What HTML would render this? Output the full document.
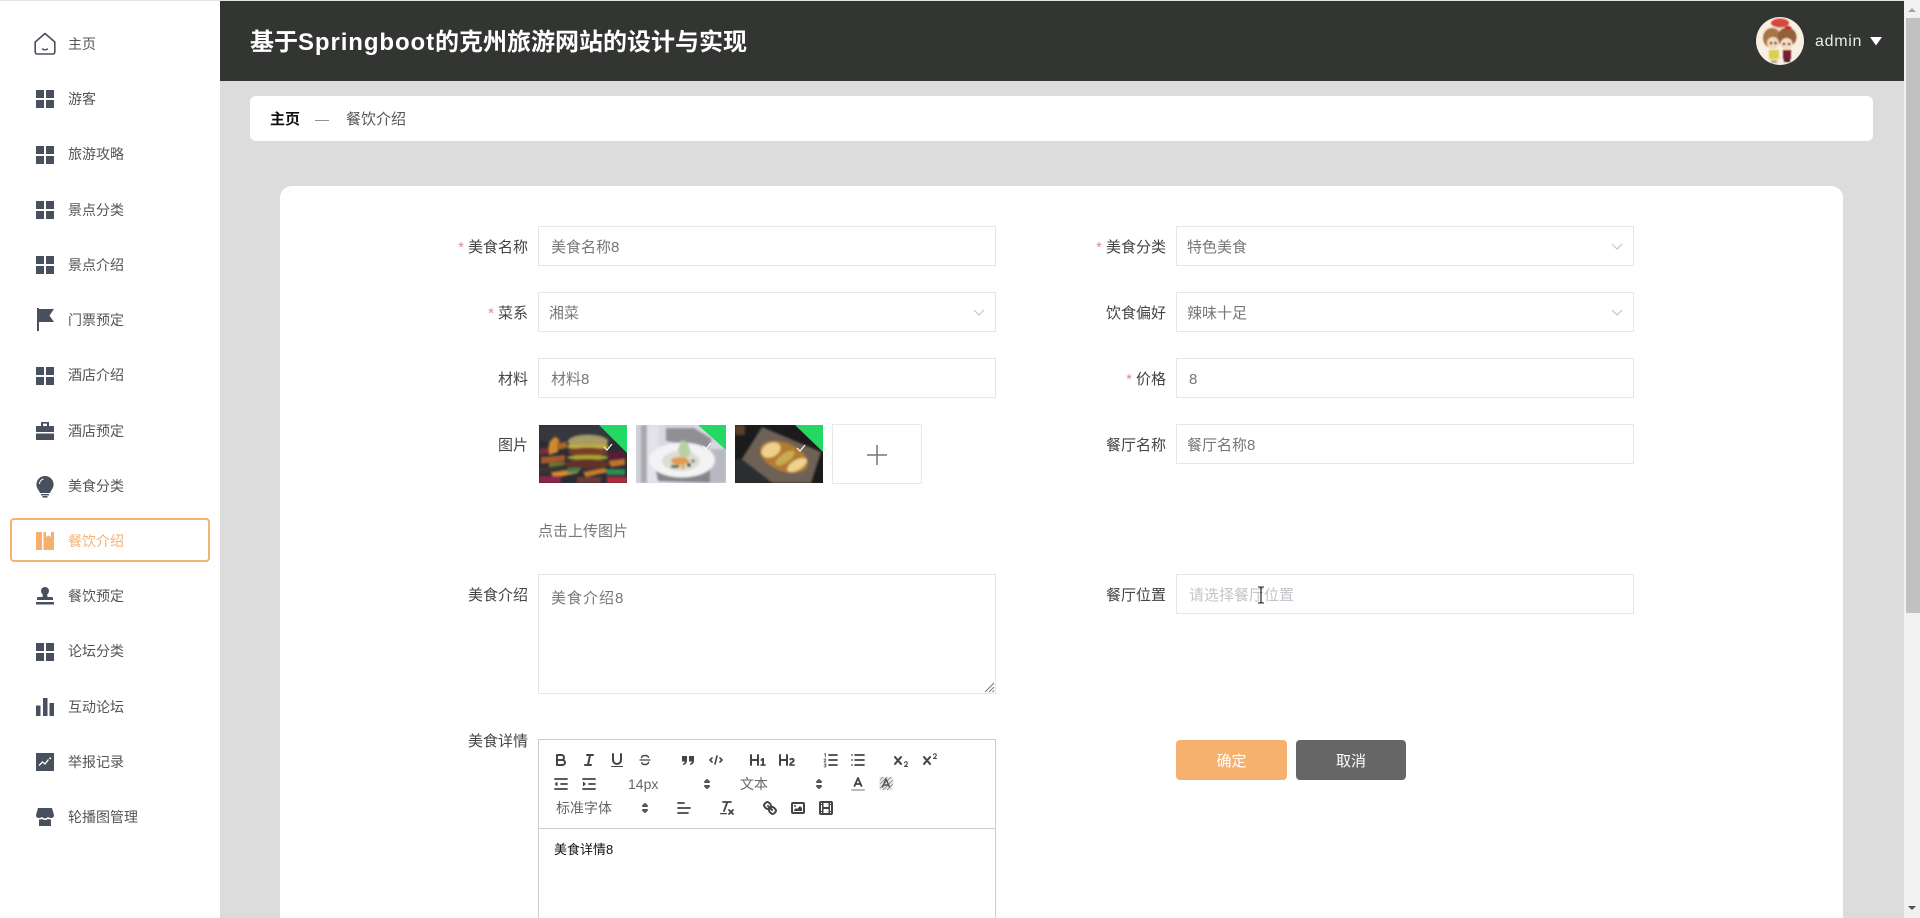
<!DOCTYPE html>
<html lang="zh">
<head>
<meta charset="utf-8">
<title>餐饮介绍</title>
<style>
html,body{margin:0;padding:0;width:1920px;height:918px;overflow:hidden;background:#dcdcdc}
body{position:relative;font-family:"Liberation Sans","Noto Sans CJK SC",sans-serif;font-size:14px;color:#444}
.a{position:absolute}
.t{position:absolute;white-space:nowrap;line-height:20px}
#side{position:absolute;left:0;top:1px;width:220px;height:917px;background:#fff}
.m{position:absolute;left:68px;white-space:nowrap;line-height:20px;color:#555;font-size:14px}
.i{position:absolute;left:36px;width:18px;height:18px}
.box{position:absolute;box-sizing:border-box;border:1px solid #e6e6e6;background:#fff;width:458px;height:40px}
.val{position:absolute;white-space:nowrap;line-height:20px;color:#777;font-size:15px;margin-top:1px}
.lab{position:absolute;white-space:nowrap;line-height:20px;color:#444;font-size:15px;text-align:right;width:110px;margin-top:1px}
.lab b{color:#e08a9a;font-weight:400;margin-right:4px}
.q{position:absolute;width:18px;height:18px;fill:none;stroke:#444;stroke-width:2;stroke-linecap:round;stroke-linejoin:round}
.q .f{fill:#444;stroke:none}
.th{position:absolute;top:425px;height:58px;overflow:hidden}
.sel{position:absolute;width:18px;height:18px;fill:#555;stroke:#555;stroke-width:2;stroke-linejoin:round}
.chev{position:absolute;width:14px;height:14px;fill:none;stroke:#c4c6cb;stroke-width:1.2}
</style>
</head>
<body>
<div class="a" style="left:0;top:0;width:1920px;height:1px;background:#e4e4e4"></div>

<!-- Sidebar -->
<div id="side"></div>
<svg class="a" style="left:34px;top:32px" width="22" height="24" viewBox="0 0 22 24" fill="none" stroke="#47505c" stroke-width="1.6" stroke-linejoin="round" stroke-linecap="round"><path d="M1.2 10 L11 1.500 L20.800 10 V20 a2 2 0 0 1-2 2 H3.200 a2 2 0 0 1-2-2 Z"/><path d="M8.500 17 q2.500 1.600 5 0" stroke-width="1.400"/></svg>
<span class="m" style="top:34px">主页</span>

<svg class="i" style="top:90px" viewBox="0 0 18 18" fill="#47505c"><rect width="8" height="8"/><rect x="10" width="8" height="8"/><rect y="10" width="8" height="8"/><rect x="10" y="10" width="8" height="8"/></svg>
<span class="m" style="top:89px">游客</span>

<svg class="i" style="top:146px" viewBox="0 0 18 18" fill="#47505c"><rect width="8" height="8"/><rect x="10" width="8" height="8"/><rect y="10" width="8" height="8"/><rect x="10" y="10" width="8" height="8"/></svg>
<span class="m" style="top:144px">旅游攻略</span>

<svg class="i" style="top:201px" viewBox="0 0 18 18" fill="#47505c"><rect width="8" height="8"/><rect x="10" width="8" height="8"/><rect y="10" width="8" height="8"/><rect x="10" y="10" width="8" height="8"/></svg>
<span class="m" style="top:200px">景点分类</span>

<svg class="i" style="top:256px" viewBox="0 0 18 18" fill="#47505c"><rect width="8" height="8"/><rect x="10" width="8" height="8"/><rect y="10" width="8" height="8"/><rect x="10" y="10" width="8" height="8"/></svg>
<span class="m" style="top:255px">景点介绍</span>

<svg class="a" style="left:36px;top:308px" width="19" height="23" viewBox="0 0 19 23" fill="#47505c"><rect x="1" y="0" width="2" height="23"/><path d="M3 1 H18 L13.500 7.500 L18 14 H3 Z"/></svg>
<span class="m" style="top:310px">门票预定</span>

<svg class="i" style="top:367px" viewBox="0 0 18 18" fill="#47505c"><rect width="8" height="8"/><rect x="10" width="8" height="8"/><rect y="10" width="8" height="8"/><rect x="10" y="10" width="8" height="8"/></svg>
<span class="m" style="top:365px">酒店介绍</span>

<svg class="i" style="top:422px" viewBox="0 0 18 18" fill="#47505c"><path d="M5 0 H13 V4 H18 V10 H0 V4 H5 Z M7 1.600 V4 H11 V1.600 Z" fill-rule="evenodd"/><rect y="11.500" width="18" height="6.500"/></svg>
<span class="m" style="top:421px">酒店预定</span>

<svg class="a" style="left:36px;top:476px" width="18" height="22" viewBox="0 0 18 22" fill="#47505c"><path d="M9 0 a8.600 8.600 0 0 1 8.600 8.600 c0 3.600-2.600 5.600-3.600 8.400 H4 C3 14.200.4 12.200.4 8.600 A8.600 8.600 0 0 1 9 0Z"/><rect x="5" y="18" width="8" height="1.400"/><rect x="6.500" y="20" width="5" height="1.600"/><path d="M3.500 8 a5 5 0 0 1 4-5" fill="none" stroke="#fff" stroke-width="1"/></svg>
<span class="m" style="top:476px">美食分类</span>

<div class="a" style="left:10px;top:518px;width:200px;height:44px;box-sizing:border-box;border:2px solid #f3b373;border-radius:4px"></div>
<svg class="i" style="top:532px" viewBox="0 0 18 18" fill="#f5b06c"><rect width="6" height="18"/><path d="M7.500 0 H10 V5 L12.500 3.500 L15 5 V0 H18 V18 H7.500 Z"/></svg>
<span class="m" style="top:531px;color:#f3b373">餐饮介绍</span>

<svg class="i" style="top:587px" viewBox="0 0 18 18" fill="#47505c"><circle cx="9" cy="4" r="4"/><path d="M7 6 H11 L11.500 10 H16 Q17 10 17 12 V13 H1 V12 Q1 10 2 10 H6.500 Z"/><rect y="15" width="18" height="2.500"/></svg>
<span class="m" style="top:586px">餐饮预定</span>

<svg class="i" style="top:643px" viewBox="0 0 18 18" fill="#47505c"><rect width="8" height="8"/><rect x="10" width="8" height="8"/><rect y="10" width="8" height="8"/><rect x="10" y="10" width="8" height="8"/></svg>
<span class="m" style="top:641px">论坛分类</span>

<svg class="i" style="top:698px" viewBox="0 0 18 18" fill="#47505c"><rect y="7.500" width="4.500" height="10.500"/><rect x="7" width="4.500" height="18"/><rect x="13.500" y="5" width="4.500" height="13"/></svg>
<span class="m" style="top:697px">互动论坛</span>

<svg class="i" style="top:753px" viewBox="0 0 18 18"><rect width="18" height="18" fill="#47505c"/><path d="M3 12.500 L6.500 9 L9 11 L12.500 6.500" fill="none" stroke="#fff" stroke-width="1.300"/><circle cx="14.200" cy="5.200" r="1" fill="#fff"/></svg>
<span class="m" style="top:752px">举报记录</span>

<svg class="i" style="top:808px" viewBox="0 0 18 18" fill="#47505c"><path d="M2 0 H16 L18 7 Q18 10 15 10 Q13 10 12 9 Q10.500 10.500 9 10.500 Q7.500 10.500 6 9 Q5 10 3 10 Q0 10 0 7 Z"/><path d="M3 11.500 Q5 11.500 6 11 Q7.500 12 9 12 Q10.500 12 12 11 Q13 11.500 15 11.500 V18 H3 Z"/></svg>
<span class="m" style="top:807px">轮播图管理</span>

<!-- Header -->
<div class="a" style="left:220px;top:1px;width:1684px;height:80px;background:#333532"></div>
<div class="t" style="left:250px;top:26px;line-height:34px;font-size:24px;font-weight:700;color:#fff">基于<span style="letter-spacing:.9px">Springboot</span>的克州旅游网站的设计与实现</div>

<svg class="a" style="left:1756px;top:17px" width="48" height="48" viewBox="0 0 48 48">
<defs><clipPath id="av"><circle cx="24" cy="24" r="24"/></clipPath><filter id="b1"><feGaussianBlur stdDeviation=".8"/></filter></defs>
<g clip-path="url(#av)"><rect width="48" height="48" fill="#f8efe0"/>
<g filter="url(#b1)">
<path d="M12 14 Q24 0 36 14 Z" fill="#eed8c8"/>
<ellipse cx="24" cy="6" rx="9" ry="4.500" fill="#d6463a"/>
<ellipse cx="16" cy="21" rx="9" ry="10" fill="#a87644"/>
<ellipse cx="31" cy="20" rx="9.500" ry="9.500" fill="#94603a"/>
<ellipse cx="17" cy="26" rx="6" ry="6" fill="#f4d8bc"/>
<ellipse cx="30.500" cy="27" rx="6" ry="6" fill="#f6dcc2"/>
<circle cx="15" cy="26" r="1.300" fill="#4a3020"/><circle cx="19.500" cy="26" r="1.300" fill="#4a3020"/><circle cx="28" cy="27" r="1.300" fill="#4a3020"/><circle cx="33" cy="27" r="1.300" fill="#4a3020"/>
<rect x="13" y="33" width="10" height="9" fill="#dccf50"/>
<rect x="27" y="33" width="8" height="9" fill="#7c1f33"/>
<ellipse cx="32" cy="11" rx="3.500" ry="2" fill="#c22a2a"/>
<rect x="15" y="43" width="6" height="3" fill="#bda98a"/><rect x="28" y="42" width="6" height="3" fill="#3a1a20"/>
</g></g></svg>
<div class="t" style="left:1815px;top:32px;font-size:16px;letter-spacing:.7px;color:#e8ece8">admin</div>
<svg class="a" style="left:1870px;top:37px" width="12" height="9" viewBox="0 0 12 9"><path d="M0 0 H12 L6 8.500Z" fill="#fff"/></svg>

<!-- Scrollbar -->
<div class="a" style="left:1904px;top:0;width:16px;height:918px;background:#f1f1f1"></div>
<div class="a" style="left:1906px;top:18px;width:14px;height:595px;background:#c1c1c1"></div>
<svg class="a" style="left:1907px;top:6px" width="10" height="8" viewBox="0 0 10 8"><path d="M1 6 L5 2 L9 6Z" fill="#a3a3a3"/></svg>
<svg class="a" style="left:1907px;top:904px" width="10" height="8" viewBox="0 0 10 8"><path d="M1 2 L5 6 L9 2Z" fill="#505050"/></svg>

<!-- Breadcrumb -->
<div class="a" style="left:250px;top:96px;width:1623px;height:45px;background:#fff;border-radius:6px"></div>
<div class="t" style="left:270px;top:110px;font-size:15px;font-weight:700;color:#111">主页</div>
<div class="t" style="left:315px;top:109px;color:#888">—</div>
<div class="t" style="left:346px;top:110px;font-size:15px;color:#555">餐饮介绍</div>

<!-- Card -->
<div class="a" style="left:280px;top:186px;width:1563px;height:732px;background:#fff;border-radius:12px 12px 0 0"></div>

<!-- Row 1 -->
<div class="lab" style="left:418px;top:237px"><b>*</b>美食名称</div>
<div class="box" style="left:538px;top:226px"></div>
<div class="val" style="left:551px;top:237px">美食名称8</div>
<div class="lab" style="left:1056px;top:237px"><b>*</b>美食分类</div>
<div class="box" style="left:1176px;top:226px"></div>
<div class="val" style="left:1187px;top:237px">特色美食</div>
<svg class="chev" style="left:1610px;top:239px" viewBox="0 0 14 14"><path d="M2 5 L7 10 L12 5"/></svg>

<!-- Row 2 -->
<div class="lab" style="left:418px;top:303px"><b>*</b>菜系</div>
<div class="box" style="left:538px;top:292px"></div>
<div class="val" style="left:549px;top:303px">湘菜</div>
<svg class="chev" style="left:972px;top:305px" viewBox="0 0 14 14"><path d="M2 5 L7 10 L12 5"/></svg>
<div class="lab" style="left:1056px;top:303px">饮食偏好</div>
<div class="box" style="left:1176px;top:292px"></div>
<div class="val" style="left:1187px;top:303px">辣味十足</div>
<svg class="chev" style="left:1610px;top:305px" viewBox="0 0 14 14"><path d="M2 5 L7 10 L12 5"/></svg>

<!-- Row 3 -->
<div class="lab" style="left:418px;top:369px">材料</div>
<div class="box" style="left:538px;top:358px"></div>
<div class="val" style="left:551px;top:369px">材料8</div>
<div class="lab" style="left:1056px;top:369px"><b>*</b>价格</div>
<div class="box" style="left:1176px;top:358px"></div>
<div class="val" style="left:1189px;top:369px">8</div>

<!-- Row 4 images -->
<div class="lab" style="left:418px;top:435px">图片</div>

<svg class="th" style="left:539px" width="88" height="58" viewBox="0 0 88 58">
<defs><filter id="b2" x="-5%" y="-5%" width="110%" height="110%"><feGaussianBlur stdDeviation="1"/></filter></defs>
<rect width="88" height="58" fill="#2b2c33"/>
<g filter="url(#b2)">
<rect x="0" y="0" width="88" height="16" fill="#36373e"/>
<path d="M10 18 l6 -6 l4 3 l-1 12 l-9 3Z" fill="#d08a2e"/>
<path d="M0 24 l10 -2 v6 l-10 2Z" fill="#7a2e38"/>
<path d="M18 18 l10 -1 v6 l-10 2Z" fill="#a8662c"/>
<path d="M2 32 l24 -2 v6 l-24 3Z" fill="#a6592e"/>
<path d="M10 38 l16 -1 v3 l-16 2Z" fill="#6b7a34"/>
<ellipse cx="49" cy="17" rx="20" ry="7" fill="#a89b66"/>
<rect x="29" y="20" width="40" height="3.500" fill="#c2b03a"/>
<ellipse cx="49" cy="27" rx="20" ry="4.500" fill="#7b3a2c"/>
<ellipse cx="49" cy="32.500" rx="21" ry="2.500" fill="#a9a730"/>
<ellipse cx="48" cy="39" rx="23" ry="5" fill="#62302a"/>
<path d="M68 28 l18 -2 v8 l-18 2Z" fill="#5a1f34"/>
<path d="M70 36 l16 -2 v6 l-14 2Z" fill="#c0752c"/>
<path d="M0 42 h26 v6 h-26Z" fill="#40362e"/>
<path d="M12 48 l24 -4 l3 4 l-24 5Z" fill="#d68c30"/>
<path d="M44 47 l22 -4 l3 4 l-22 5Z" fill="#c87c2a"/>
<path d="M66 44 l20 0 v6 h-18Z" fill="#2f8c54"/>
<path d="M28 43 l14 0 l-2 4 l-12 1Z" fill="#3d8050"/>
<path d="M0 51 h22 v7 h-22Z" fill="#8a2548"/>
<path d="M38 52 h24 v6 h-24Z" fill="#6e3a3a"/>
<path d="M68 52 h20 v6 h-20Z" fill="#b52a3e"/>
</g>
<path d="M60 0 H88 V28Z" fill="#23d963"/>
<path d="M65 22 l3 3 l5 -6" fill="none" stroke="#fff" stroke-width="1.200"/>
</svg>

<svg class="th" style="left:636px" width="90" height="58" viewBox="0 0 90 58">
<rect width="90" height="58" fill="#d8d8e4"/>
<g filter="url(#b2)">
<rect x="0" y="0" width="6" height="58" fill="#cfcfd6"/>
<rect x="5" y="0" width="6" height="58" fill="#a8a8ac"/>
<rect x="11" y="0" width="12" height="58" fill="#e2e2ea"/>
<path d="M18 38 L22 56 L84 58 L78 44Z" fill="#85858a"/>
<path d="M30 3 L58 3 L76 14 L72 24 L30 16Z" fill="#909094"/>
<rect x="74" y="24" width="16" height="34" fill="#b8b8c0"/>
<ellipse cx="46" cy="35" rx="33" ry="17.500" fill="#f3f3f5"/>
<ellipse cx="45" cy="36" rx="19" ry="10" fill="#dedcd4"/>
<path d="M42 24 l4 -9 l6 3 l3 10 l-5 5 l-6 -2Z" fill="#bad0a2"/>
<ellipse cx="44" cy="36" rx="9" ry="4" fill="#e29c4e"/>
<rect x="35" y="40" width="8" height="3" fill="#3a6a40"/>
<circle cx="53" cy="40" r="2" fill="#5a2a36"/><circle cx="47" cy="42" r="2" fill="#e8a030"/><circle cx="57" cy="36" r="1.500" fill="#3a2a30"/>
</g>
<path d="M62 0 H90 V25Z" fill="#23d963"/>
<path d="M67 21 l3 3 l5 -6" fill="none" stroke="#fff" stroke-width="1.200"/>
</svg>

<svg class="th" style="left:735px" width="88" height="58" viewBox="0 0 88 58">
<rect width="88" height="58" fill="#1c1b1b"/>
<g filter="url(#b2)">
<rect x="0" y="0" width="10" height="10" fill="#5a3e2c"/>
<rect x="0" y="34" width="40" height="24" fill="#2c2d31"/>
<path d="M27 2 L86 27 L76 58 L38 58 L7 34 Z" fill="#6e6257"/>
<ellipse cx="49" cy="32" rx="25" ry="14" transform="rotate(22 49 32)" fill="#b47a30"/>
<ellipse cx="36" cy="25" rx="10" ry="7" transform="rotate(-25 36 25)" fill="#eed08c"/>
<ellipse cx="50" cy="33" rx="11" ry="4.500" transform="rotate(-35 50 33)" fill="#c8ac54"/>
<ellipse cx="62" cy="40" rx="11" ry="5" transform="rotate(-30 62 40)" fill="#edd28c"/>
</g>
<path d="M60 0 H88 V27Z" fill="#23d963"/>
<path d="M62 23 l3 3 l5 -6" fill="none" stroke="#fff" stroke-width="1.200"/>
</svg>

<div class="a" style="left:832px;top:424px;width:90px;height:60px;box-sizing:border-box;border:1px solid #e8e8e8"></div>
<svg class="a" style="left:867px;top:445px" width="20" height="20" viewBox="0 0 20 20"><path d="M10 0 V20 M0 10 H20" stroke="#777" stroke-width="1.500"/></svg>
<div class="t" style="left:538px;top:522px;font-size:15px;color:#777">点击上传图片</div>

<div class="lab" style="left:1056px;top:435px">餐厅名称</div>
<div class="box" style="left:1176px;top:424px"></div>
<div class="val" style="left:1187px;top:435px">餐厅名称8</div>

<!-- Row 5 -->
<div class="lab" style="left:418px;top:585px">美食介绍</div>
<div class="box" style="left:538px;top:574px;height:120px"></div>
<svg class="a" style="left:984px;top:682px" width="11" height="11" viewBox="0 0 11 11"><path d="M1 10 L10 1 M5 10 L10 5 M8.500 10 L10 8.500" stroke="#777" stroke-width="1"/></svg>
<div class="val" style="left:551px;top:588px;letter-spacing:1px">美食介绍8</div>
<div class="lab" style="left:1056px;top:585px">餐厅位置</div>
<div class="box" style="left:1176px;top:574px"></div>
<div class="val" style="left:1189px;top:585px;color:#c2c4c9">请选择餐厅位置</div>
<svg class="a" style="left:1256px;top:586px" width="10" height="18" viewBox="0 0 10 18"><path d="M2 1 H4 Q5 1 5 2.500 V15.500 Q5 17 4 17 H2 M8 1 H6 Q5 1 5 2.500 M8 17 H6 Q5 17 5 15.500" fill="none" stroke="#111" stroke-width="1.100"/></svg>

<!-- Row 6 -->
<div class="lab" style="left:418px;top:731px">美食详情</div>

<div class="a" style="left:538px;top:739px;width:458px;height:179px;box-sizing:border-box;border:1px solid #ccc;border-bottom:0"></div>
<div class="a" style="left:538px;top:828px;width:458px;height:1px;background:#ccc"></div>

<!-- Toolbar row 1 -->
<svg class="q" style="left:552px;top:751px" viewBox="0 0 18 18"><path d="M5,4H9.500A2.500,2.500,0,0,1,12,6.500v0A2.500,2.500,0,0,1,9.500,9H5V4Z"/><path d="M5,9h5.500A2.500,2.500,0,0,1,13,11.500v0A2.500,2.500,0,0,1,10.500,14H5V9Z"/></svg>
<svg class="q" style="left:580px;top:751px" viewBox="0 0 18 18"><path d="M7 4H13M5 14H11M8 14L10 4"/></svg>
<svg class="q" style="left:608px;top:751px" viewBox="0 0 18 18"><path d="M5,3V9a4,4,0,0,0,4,4h0a4,4,0,0,0,4-4V3"/><rect class="f" height="1" rx=".5" width="12" x="3" y="15"/></svg>
<svg class="q" style="left:636px;top:751px" viewBox="0 0 18 18"><path d="M14 9H4" stroke-width="1.300"/><path d="M12.400 6.300C12 5 10.700 4.500 9 4.500 7 4.500 5.500 5.500 5.500 6.700" stroke-width="1.400"/><path d="M5.700 11.700C6 13 7.300 13.500 9 13.500c2 0 3.500-1 3.500-2.200" stroke-width="1.400"/></svg>
<svg class="q" style="left:679px;top:751px" viewBox="0 0 18 18"><path class="f" d="M3 5h5v4.500c0 2.500-1.500 4-3.800 4.500L3.800 12.800C5 12.400 5.700 11.600 5.800 10.500H3ZM10 5h5v4.500c0 2.500-1.500 4-3.800 4.500l-.4-1.200c1.200-.4 1.900-1.200 2-2.300H10Z"/></svg>
<svg class="q" style="left:707px;top:751px" viewBox="0 0 18 18"><path d="M5 7L3 9L5 11M13 7L15 9L13 11M10 5L8 13" stroke-width="1.600"/></svg>
<svg class="q" style="left:749px;top:751px" viewBox="0 0 18 18"><path class="f" d="M10,4V14a1,1,0,0,1-2,0V10H3v4a1,1,0,0,1-2,0V4A1,1,0,0,1,3,4V8H8V4a1,1,0,0,1,2,0Zm6.068,9.209H14.990V7.599a.541.541,0,0,0-.605-.605h-.627a1.011,1.011,0,0,0-.748.297L11.645,8.566a.544.544,0,0,0-.022.858l.286.308a.539.539,0,0,0,.847.033l.099-.088a1.214,1.214,0,0,0,.242-.353h.022s-.011.309-.011.605V13.209H12.041a.541.541,0,0,0-.605.605v.439a.541.541,0,0,0,.605.605h4.027a.541.541,0,0,0,.605-.605v-.439A.541.541,0,0,0,16.068,13.209Z"/></svg>
<svg class="q" style="left:778px;top:751px" viewBox="0 0 18 18"><path class="f" d="M16.740,13.814v.439a.541.541,0,0,1-.605.605H11.855a.584.584,0,0,1-.649-.605V14.013c0-2.905,3.399-3.422,3.399-4.555a.777.777,0,0,0-.847-.781,1.177,1.177,0,0,0-.836.385c-.275.264-.561.374-.858.132l-.429-.341c-.308-.242-.385-.518-.154-.814a2.972,2.972,0,0,1,2.454-1.177,2.454,2.454,0,0,1,2.684,2.409c0,2.453-3.179,2.927-3.278,3.938h2.794A.541.541,0,0,1,16.740,13.814ZM9,3A1,1,0,0,0,8,4V8H3V4A1,1,0,0,0,1,4V14a1,1,0,0,0,2,0V10H8v4a1,1,0,0,0,2,0V4A1,1,0,0,0,9,3Z"/></svg>
<svg class="q" style="left:822px;top:751px" viewBox="0 0 18 18"><path d="M7 4H15M7 9H15M7 14H15" stroke-width="1.700"/><path d="M2.500 3L3.300 2.500V6M2 8.300Q3.500 7.400 3.800 8.800L2 11H4M2.200 13H4L3 14.200Q4.300 14.400 4 15.500 3.500 16.500 2 15.800" stroke-width=".8" fill="none"/></svg>
<svg class="q" style="left:849px;top:751px" viewBox="0 0 18 18"><path d="M6 4H15M6 9H15M6 14H15M3 4H3M3 9H3M3 14H3" stroke-width="1.700"/></svg>
<svg class="q" style="left:892px;top:751px" viewBox="0 0 18 18"><path class="f" d="M15.500,15H13.861a3.858,3.858,0,0,0,1.914-2.975,1.8,1.800,0,0,0-1.600-1.751A1.921,1.921,0,0,0,12.021,11.700a.5,.5,0,1,0,.957.291h0a.914,.914,0,0,1,1.053-.725,.81,.81,0,0,1,.744.762c0,1.076-1.170,1.870-1.940,2.431A1.456,1.456,0,0,0,12,15.500a.5,.5,0,0,0,.5.5h3A.5,.5,0,0,0,15.500,15Z"/><path class="f" d="M9.650,5.241a1,1,0,0,0-1.409.108L6,7.964,3.759,5.349A1,1,0,0,0,2.241,6.651L4.684,9.500,2.241,12.350A1,1,0,0,0,3.759,13.650L6,11.036,8.241,13.650a1,1,0,1,0,1.518-1.300L7.316,9.500,9.759,6.651A1,1,0,0,0,9.650,5.241Z"/></svg>
<svg class="q" style="left:921px;top:751px" viewBox="0 0 18 18"><path class="f" d="M15.500,7H13.861a4.015,4.015,0,0,0,1.914-2.975,1.8,1.800,0,0,0-1.600-1.751A1.922,1.922,0,0,0,12.021,3.700a.5,.5,0,1,0,.957.291,.917,.917,0,0,1,1.053-.725,.81,.81,0,0,1,.744.762c0,1.077-1.164,1.925-1.934,2.486A1.423,1.423,0,0,0,12,7.500a.5,.5,0,0,0,.5.5h3A.5,.5,0,0,0,15.500,7Z"/><path class="f" d="M9.650,5.241a1,1,0,0,0-1.409.108L6,7.964,3.759,5.349A1,1,0,0,0,2.241,6.651L4.684,9.500,2.241,12.350A1,1,0,0,0,3.759,13.650L6,11.036,8.241,13.650a1,1,0,1,0,1.518-1.300L7.316,9.500,9.759,6.651A1,1,0,0,0,9.650,5.241Z"/></svg>

<!-- Toolbar row 2 -->
<svg class="q" style="left:552px;top:775px" viewBox="0 0 18 18"><path d="M3 14H15M3 4H15M9 9H15" stroke-width="1.800"/><path class="f" d="M5.500 6.500V11.500L2.500 9Z"/></svg>
<svg class="q" style="left:580px;top:775px" viewBox="0 0 18 18"><path d="M3 14H15M3 4H15M9 9H15" stroke-width="1.800"/><path class="f" d="M3 6.500V11.500L6 9Z"/></svg>
<div class="t" style="left:628px;top:774px;font-size:14px;color:#666">14px</div>
<svg class="sel" style="left:698px;top:775px" viewBox="0 0 18 18"><path d="M7 11L9 13L11 11ZM7 7L9 5L11 7Z"/></svg>
<div class="t" style="left:740px;top:774px;font-size:14px;color:#666">文本</div>
<svg class="sel" style="left:810px;top:775px" viewBox="0 0 18 18"><path d="M7 11L9 13L11 11ZM7 7L9 5L11 7Z"/></svg>
<svg class="q" style="left:849px;top:775px" viewBox="0 0 18 18"><path d="M5.500 11L9 3L12.500 11M11.630 9H6.380" stroke-width="1.800"/><path d="M3 15H15" stroke="#bbb" stroke-width="2"/></svg>
<svg class="q" style="left:877px;top:775px" viewBox="0 0 18 18"><rect x="2.500" y="2" width="13" height="13" fill="#e6e6e6" stroke="none"/><path d="M3 5l3-3M3 9l7-7M3 13l11-11M6 15l10-10M10 15l6-6" stroke="#888" stroke-width=".8"/><path d="M5.500 12L9 4L12.500 12M11.630 10H6.380" stroke-width="1.500" stroke="#555"/></svg>

<!-- Toolbar row 3 -->
<div class="t" style="left:556px;top:798px;font-size:14px;color:#666">标准字体</div>
<svg class="sel" style="left:636px;top:799px" viewBox="0 0 18 18"><path d="M7 11L9 13L11 11ZM7 7L9 5L11 7Z"/></svg>
<svg class="q" style="left:675px;top:799px" viewBox="0 0 18 18"><path d="M3 9H15M3 14H13M3 4H9" stroke-width="1.800"/></svg>
<svg class="q" style="left:718px;top:799px" viewBox="0 0 18 18"><path d="M5 3H13M6 12L9.350 3M11 11L15 15M15 11L11 15" stroke-width="1.800"/><rect class="f" height="1.200" rx=".5" width="7" x="2" y="14"/></svg>
<svg class="q" style="left:761px;top:799px" viewBox="0 0 18 18"><path d="M7 7L11 11"/><path d="M8.900,4.577a3.476,3.476,0,0,1,.36,4.679A3.476,3.476,0,0,1,4.577,8.900C3.185,7.500,2.035,6.400,4.217,4.217S7.500,3.185,8.900,4.577Z"/><path d="M13.423,9.100a3.476,3.476,0,0,0-4.679-.36,3.476,3.476,0,0,0,.36,4.679c1.392,1.392,2.500,2.542,4.679.36S14.815,10.500,13.423,9.100Z"/></svg>
<svg class="q" style="left:789px;top:799px" viewBox="0 0 18 18"><rect height="10" rx="1" width="12" x="3" y="4"/><circle class="f" cx="6" cy="7" r="1"/><path class="f" d="M5 12V11L7 9L8 10L11 7L13 9V12Z"/></svg>
<svg class="q" style="left:817px;top:799px" viewBox="0 0 18 18"><rect height="12" rx="1" width="12" x="3" y="3"/><rect class="f" height="12" width="1.500" x="5" y="3"/><rect class="f" height="12" width="1.500" x="11.500" y="3"/><rect class="f" height="2" width="8" x="5" y="8"/><rect class="f" height="1" width="3" x="3" y="5"/><rect class="f" height="1" width="3" x="3" y="12"/><rect class="f" height="1" width="3" x="12" y="5"/><rect class="f" height="1" width="3" x="12" y="12"/></svg>

<div class="t" style="left:554px;top:840px;font-size:13px;line-height:20px;color:#111">美食详情8</div>

<!-- Buttons -->
<div class="a" style="left:1176px;top:740px;width:111px;height:40px;background:#f7b16f;border-radius:4px;color:#fff;text-align:center;line-height:43px;font-size:15px">确定</div>
<div class="a" style="left:1296px;top:740px;width:110px;height:40px;background:#666;border-radius:4px;color:#fff;text-align:center;line-height:43px;font-size:15px">取消</div>
</body>
</html>
